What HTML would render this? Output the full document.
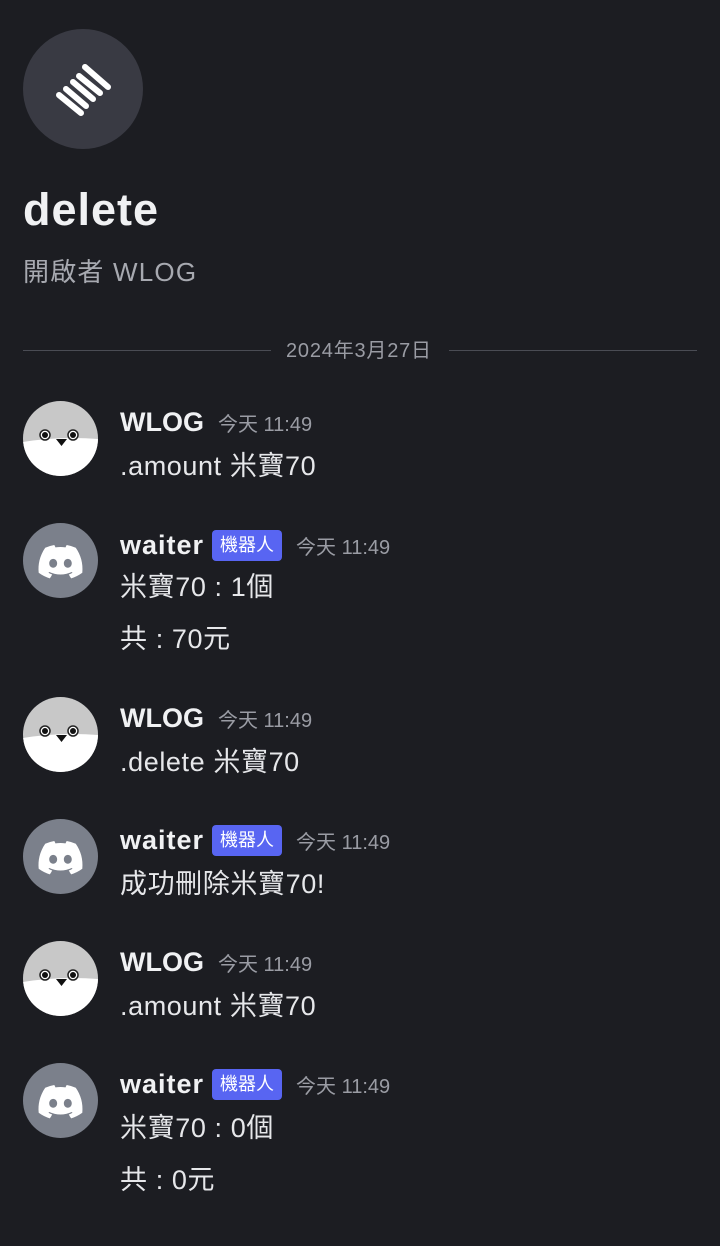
<!DOCTYPE html>
<html><head><meta charset="utf-8"><style>
body{margin:0;width:720px;height:1246px;background:#1c1d22;overflow:hidden;font-family:"Liberation Sans","Noto Sans CJK TC",sans-serif;position:relative}
.a{position:absolute}
.name{position:absolute;left:120px;font-size:27px;font-weight:bold;color:#f0f1f3;line-height:30px}
.w{letter-spacing:1px}
.time{font-size:20px;color:#9a9ca4;font-weight:normal;margin-left:14px;letter-spacing:0}
.badge{display:inline-block;background:#5865f2;color:#fff;font-size:18px;font-weight:normal;padding:0 8px;border-radius:4px;line-height:31px;vertical-align:3px;margin-left:8px;letter-spacing:0}
.txt{position:absolute;left:120px;font-size:27px;color:#e6e7ea;line-height:30px;letter-spacing:0.6px}
</style></head><body>
<svg class="a" style="left:23px;top:29px" width="120" height="120" viewBox="0 0 120 120">
<circle cx="60" cy="60" r="60" fill="#393a43"/>
<g stroke="#fff" stroke-width="6" stroke-linecap="round">
<line x1="36" y1="66" x2="58" y2="84"/><line x1="43" y1="60" x2="63" y2="77"/><line x1="50" y1="53" x2="70" y2="70"/><line x1="56" y1="47" x2="77" y2="64"/><line x1="62" y1="38" x2="85" y2="58"/>
</g></svg>
<div class="a" style="left:23px;top:184px;font-size:45px;font-weight:bold;color:#f0f1f3;line-height:52px;letter-spacing:1px">delete</div>
<div class="a" style="left:23px;top:256px;font-size:26px;color:#a7a9b0;line-height:32px;letter-spacing:1.2px">開啟者 WLOG</div>
<div class="a" style="left:23px;top:350px;width:248px;height:1px;background:#4a4c54"></div>
<div class="a" style="left:449px;top:350px;width:248px;height:1px;background:#4a4c54"></div>
<div class="a" style="left:286px;top:339px;font-size:20px;color:#9a9ca4;line-height:24px;letter-spacing:0.8px">2024年3月27日</div>

<svg width="0" height="0" style="position:absolute"><defs><clipPath id="c"><circle cx="37.5" cy="37.5" r="37.5"/></clipPath>
<g id="wl"><g clip-path="url(#c)"><rect width="75" height="75" fill="#c8c8c8"/><path d="M0 41 Q37 35 75 38 V75 H0Z" fill="#fff"/></g><circle cx="22" cy="34" r="5" fill="#fff" stroke="#222" stroke-width="1.5"/><circle cx="22" cy="34" r="3" fill="#111"/><circle cx="50" cy="34" r="5" fill="#fff" stroke="#222" stroke-width="1.5"/><circle cx="50" cy="34" r="3" fill="#111"/><path d="M33 38 L44 38 L38.5 45Z" fill="#111"/></g>
<g id="dc"><circle cx="37.5" cy="37.5" r="37.5" fill="#7b808b"/><g transform="translate(15.5 22) scale(0.346)"><path fill="#fff" d="M107.7,8.07A105.15,105.15,0,0,0,81.47,0a72.06,72.06,0,0,0-3.36,6.83A97.68,97.68,0,0,0,49,6.83,72.37,72.37,0,0,0,45.64,0,105.89,105.89,0,0,0,19.39,8.09C2.79,32.65-1.71,56.6.54,80.21h0A105.73,105.73,0,0,0,32.71,96.36,77.7,77.7,0,0,0,39.6,85.25a68.42,68.42,0,0,1-10.85-5.18c.91-.66,1.8-1.34,2.66-2a75.57,75.57,0,0,0,64.32,0c.87.71,1.76,1.39,2.66,2a68.68,68.68,0,0,1-10.87,5.19,77,77,0,0,0,6.89,11.1A105.25,105.25,0,0,0,126.6,80.22h0C129.24,52.84,122.09,29.11,107.7,8.07ZM42.45,65.69C36.18,65.69,31,60,31,53s5-12.74,11.43-12.74S54,46,53.89,53,48.84,65.69,42.45,65.69Zm42.24,0C78.41,65.69,73.25,60,73.25,53s5-12.74,11.44-12.74S96.23,46,96.12,53,91.08,65.69,84.69,65.69Z"/></g></g>
</defs></svg>

<svg class="a" style="left:23px;top:401px" width="75" height="75"><use href="#wl"/></svg>
<div class="name" style="top:407px">WLOG<span class="time">今天 11:49</span></div>
<div class="txt" style="top:451px">.amount 米寶70</div>

<svg class="a" style="left:23px;top:523px" width="75" height="75"><use href="#dc"/></svg>
<div class="name w" style="top:530px">waiter<span class="badge">機器人</span><span class="time">今天 11:49</span></div>
<div class="txt" style="top:572px">米寶70 : 1個</div>
<div class="txt" style="top:624px">共 : 70元</div>

<svg class="a" style="left:23px;top:697px" width="75" height="75"><use href="#wl"/></svg>
<div class="name" style="top:703px">WLOG<span class="time">今天 11:49</span></div>
<div class="txt" style="top:747px">.delete 米寶70</div>

<svg class="a" style="left:23px;top:819px" width="75" height="75"><use href="#dc"/></svg>
<div class="name w" style="top:825px">waiter<span class="badge">機器人</span><span class="time">今天 11:49</span></div>
<div class="txt" style="top:869px">成功刪除米寶70!</div>

<svg class="a" style="left:23px;top:941px" width="75" height="75"><use href="#wl"/></svg>
<div class="name" style="top:947px">WLOG<span class="time">今天 11:49</span></div>
<div class="txt" style="top:991px">.amount 米寶70</div>

<svg class="a" style="left:23px;top:1063px" width="75" height="75"><use href="#dc"/></svg>
<div class="name w" style="top:1069px">waiter<span class="badge">機器人</span><span class="time">今天 11:49</span></div>
<div class="txt" style="top:1113px">米寶70 : 0個</div>
<div class="txt" style="top:1165px">共 : 0元</div>
</body></html>
